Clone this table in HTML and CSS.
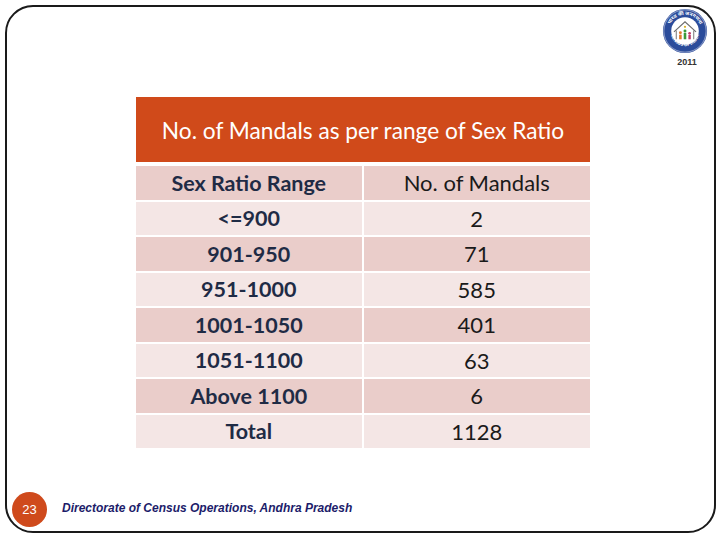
FILE: index.html
```html
<!DOCTYPE html>
<html>
<head>
<meta charset="utf-8">
<link rel="stylesheet" href="styles.css">
</head>
<body>
<div class="slide">
  <div class="logo">
    <svg width="46" height="46" viewBox="0 0 50 50">
      <defs>
        <path id="arcTop" d="M7.5 25 A17.5 17.5 0 0 1 42.5 25"/>
        <path id="arcBot" d="M9.5 26 A15.5 15.5 0 0 0 40.5 26"/>
      </defs>
      <circle cx="25" cy="25" r="24" fill="#2b4c9b"/>
      <circle cx="25" cy="25" r="23" fill="none" stroke="#e8e8f0" stroke-width="0.6"/>
      <circle cx="25" cy="25" r="15" fill="#ffffff"/>
      <text class="ring" font-size="5.4" fill="#ffffff"><textPath href="#arcTop" startOffset="50%" text-anchor="middle">भारत की जनगणना</textPath></text>
      <text class="ring" font-size="4.8" fill="#ffffff"><textPath href="#arcBot" startOffset="50%" text-anchor="middle">CENSUS OF INDIA</textPath></text>
      <path d="M13 26 L25 15 L37 26" fill="none" stroke="#6b6b6b" stroke-width="1.2"/>
      <path d="M15.5 24.5 L15.5 34 M34.5 24.5 L34.5 34" stroke="#6b6b6b" stroke-width="1"/>
      <circle cx="20" cy="27" r="1.6" fill="#e07a2a"/>
      <rect x="18.6" y="29" width="2.8" height="5" fill="#e07a2a"/>
      <circle cx="25" cy="25" r="1.6" fill="#3a9a3a"/>
      <rect x="23.6" y="27" width="2.8" height="7" fill="#3a9a3a"/>
      <circle cx="30" cy="27.5" r="1.5" fill="#c03a6a"/>
      <rect x="28.7" y="29.3" width="2.6" height="4.7" fill="#c03a6a"/>
      <circle cx="25" cy="20.5" r="1.2" fill="#d8b020"/>
    </svg>
    <span class="year">2011</span>
  </div>

  <div class="table">
    <div class="title">No. of Mandals as per range of Sex Ratio</div>
    <div class="rows">
      <div class="cell range dark">Sex Ratio Range</div>
      <div class="cell num dark">No. of Mandals</div>
      <div class="cell range light">&lt;=900</div>
      <div class="cell num light">2</div>
      <div class="cell range dark">901-950</div>
      <div class="cell num dark">71</div>
      <div class="cell range light">951-1000</div>
      <div class="cell num light">585</div>
      <div class="cell range dark">1001-1050</div>
      <div class="cell num dark">401</div>
      <div class="cell range light">1051-1100</div>
      <div class="cell num light">63</div>
      <div class="cell range dark">Above 1100</div>
      <div class="cell num dark">6</div>
      <div class="cell range light">Total</div>
      <div class="cell num light">1128</div>
    </div>
  </div>

  <div class="footer">
    <div class="page">23</div>
    <div class="source">Directorate of Census Operations, Andhra Pradesh</div>
  </div>
</div>
</body>
</html>
```

FILE: styles.css
```css
html, body {
  margin: 0;
  padding: 0;
  background: #ffffff;
}

.slide {
  position: relative;
  box-sizing: border-box;
  margin: 5px 0 0 5px;
  width: 711px;
  height: 528px;
  border: 2px solid #1a1a1a;
  border-radius: 28px;
  display: flex;
  flex-direction: column;
}

.logo {
  position: absolute;
  top: 1px;
  right: 4px;
  width: 50px;
  display: flex;
  flex-direction: column;
  align-items: center;
}

.logo svg {
  display: block;
}

.ring {
  font-family: "Noto Sans", "DejaVu Sans", sans-serif;
  font-weight: bold;
}

.year {
  font-family: "Liberation Sans", Arial, sans-serif;
  font-weight: bold;
  font-size: 9px;
  line-height: 10px;
  color: #333333;
  margin-top: 3px;
  padding-left: 4px;
}

.table {
  margin: 90px 0 0 129px;
  width: 454px;
  display: flex;
  flex-direction: column;
  gap: 4px;
  font-family: "Lato", "Open Sans", sans-serif;
}

.title {
  height: 65px;
  background: #d04a1a;
  color: #ffffff;
  font-size: 22.7px;
  display: flex;
  align-items: center;
  justify-content: center;
  padding-top: 1px;
  box-sizing: border-box;
}

.rows {
  display: grid;
  grid-template-columns: 225.5px 226.5px;
  grid-auto-rows: 33.5px;
  column-gap: 2px;
  row-gap: 2px;
}

.cell {
  display: flex;
  align-items: center;
  justify-content: center;
  font-size: 21.5px;
  box-sizing: border-box;
}

.dark {
  background: #eacdca;
}

.light {
  background: #f4e6e5;
}

.range {
  font-weight: bold;
  color: #1f2b45;
}

.num {
  color: #1a1a1a;
  font-size: 22px;
}

.footer {
  margin-top: auto;
  margin-left: 5px;
  margin-bottom: 4px;
  display: flex;
  align-items: center;
  gap: 15px;
}

.page {
  width: 35px;
  height: 35px;
  border-radius: 50%;
  background: #cf4a1c;
  color: #ffffff;
  font-family: "Liberation Sans", Arial, sans-serif;
  font-size: 13px;
  display: flex;
  align-items: center;
  justify-content: center;
}

.source {
  font-family: "Liberation Sans", Arial, sans-serif;
  font-style: italic;
  font-weight: bold;
  font-size: 12px;
  color: #1c1c6a;
  margin-top: -4px;
}
```
